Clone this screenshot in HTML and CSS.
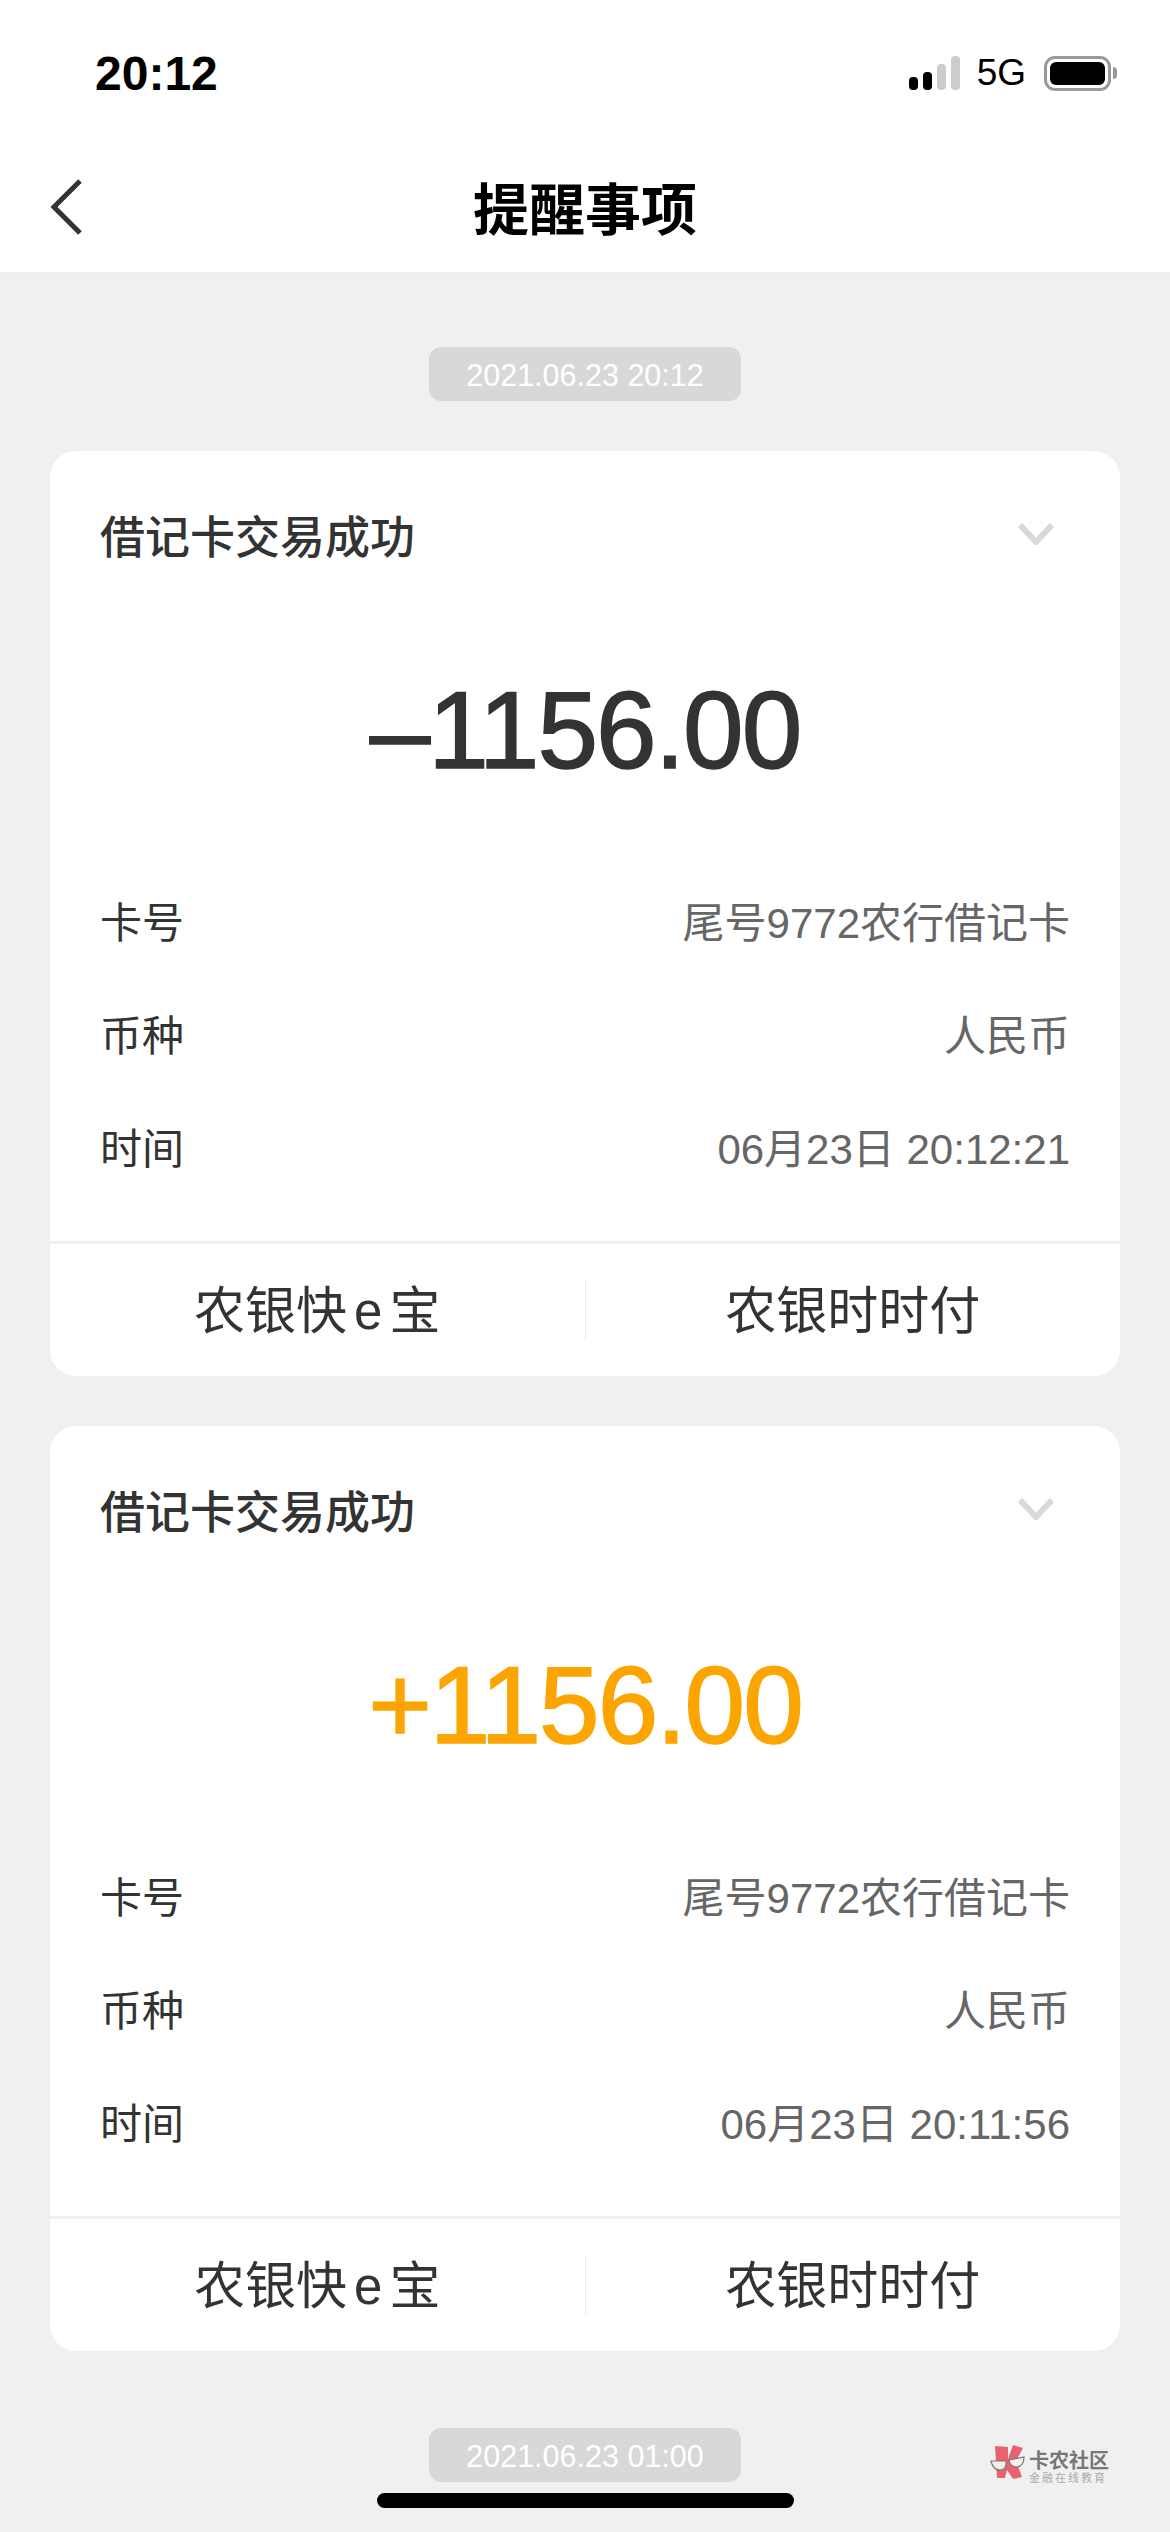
FILE: index.html
```html
<!doctype html>
<html lang="zh-CN">
  <head>
    <meta charset="utf-8">
    <title>提醒事项</title>
    <link rel="stylesheet" href="styles.css">
  </head>
  <body>
    <div class="screen">
      <header class="top">
        <div class="status">
          <span class="clock">20:12</span>
          <div class="status-right">
            <div class="signal">
              <i class="on s1"></i>
              <i class="on s2"></i>
              <i class="s3"></i>
              <i class="s4"></i>
            </div>
            <span class="net">5G</span>
            <div class="battery"><b></b></div>
            <div class="battery-cap"></div>
          </div>
        </div>
        <nav class="nav">
          <svg class="back" width="34" height="56" viewBox="0 0 34 56"><path d="M31 2 L5 28 L31 54" fill="none" stroke="#333" stroke-width="5"/></svg>
          <h1>提醒事项</h1>
        </nav>
      </header>

      <main class="list">
        <div class="stamp">2021.06.23 20:12</div>

        <section class="card">
          <div class="card-head">
            <h2>借记卡交易成功</h2>
            <svg width="36" height="22" viewBox="0 0 36 22"><path d="M2 2 L18 19 L34 2" fill="none" stroke="#d9d9d9" stroke-width="6"/></svg>
          </div>
          <div class="amount">–1156.00</div>
          <div class="rows">
            <div class="row"><span>卡号</span><em>尾号9772农行借记卡</em></div>
            <div class="row"><span>币种</span><em>人民币</em></div>
            <div class="row"><span>时间</span><em>06月23日 20:12:21</em></div>
          </div>
          <div class="actions">
            <div class="action">农银快 e 宝</div>
            <div class="action">农银时时付</div>
          </div>
        </section>

        <section class="card">
          <div class="card-head">
            <h2>借记卡交易成功</h2>
            <svg width="36" height="22" viewBox="0 0 36 22"><path d="M2 2 L18 19 L34 2" fill="none" stroke="#d9d9d9" stroke-width="6"/></svg>
          </div>
          <div class="amount income">+1156.00</div>
          <div class="rows">
            <div class="row"><span>卡号</span><em>尾号9772农行借记卡</em></div>
            <div class="row"><span>币种</span><em>人民币</em></div>
            <div class="row"><span>时间</span><em>06月23日 20:11:56</em></div>
          </div>
          <div class="actions">
            <div class="action">农银快 e 宝</div>
            <div class="action">农银时时付</div>
          </div>
        </section>

        <div class="stamp">2021.06.23 01:00</div>
      </main>

      <div class="watermark">
        <svg width="36" height="36" viewBox="0 0 36 36">
          <path d="M5 1 L18 2 V14 L23 0 L33 3 L26 16 L32 32 L23 34 L17 25 L15 33 L7 33 Z" fill="#e8636f"/>
          <path d="M1 16 L16 16 Q17 25 10 25 Q3 25 1 16 Z M19 15 L34 12 Q34 21 27 22 Q20 22 19 15 Z" fill="#f6eeee" stroke="#777" stroke-width="1.2"/>
        </svg>
        <div class="mark-text">
          <strong>卡农社区</strong>
          <small>金融在线教育</small>
        </div>
      </div>
      <div class="home-bar"></div>
    </div>
  </body>
</html>
```

FILE: styles.css
```css
html, body {
  margin: 0;
  padding: 0;
}
body {
  font-family: "Liberation Sans", "Noto Sans CJK SC", sans-serif;
  color: #333;
}
.screen {
  position: relative;
  width: 1170px;
  height: 2532px;
  overflow: hidden;
  background: #f0f0f0;
}

/* status bar + nav */
.top {
  background: #fff;
  border-bottom: 1px solid #ececec;
}
.status {
  display: flex;
  justify-content: space-between;
  align-items: center;
  height: 146px;
  padding: 0 53px 0 95px;
  box-sizing: border-box;
}
.clock {
  font-size: 48px;
  font-weight: 700;
  color: #000;
}
.status-right {
  display: flex;
  align-items: center;
}
.signal {
  display: flex;
  align-items: flex-end;
  gap: 5px;
  height: 34px;
}
.signal i {
  display: block;
  width: 9px;
  border-radius: 4px;
  background: #ccc;
}
.signal .on {
  background: #000;
}
.s1 { height: 13px; }
.s2 { height: 18px; }
.s3 { height: 26px; }
.s4 { height: 34px; }
.net {
  margin: 0 18px 0 17px;
  font-size: 37px;
  color: #000;
}
.battery {
  width: 67px;
  height: 35px;
  padding: 3px;
  border: 3px solid #999;
  border-radius: 11px;
  box-sizing: border-box;
}
.battery b {
  display: block;
  height: 100%;
  border-radius: 6px;
  background: #000;
}
.battery-cap {
  width: 4px;
  height: 12px;
  margin-left: 2px;
  border-radius: 0 6px 6px 0;
  background: #999;
}
.nav {
  position: relative;
  height: 126px;
  padding-bottom: 8px;
  box-sizing: border-box;
  display: flex;
  align-items: center;
  justify-content: center;
}
.back {
  position: absolute;
  left: 49px;
  top: 33px;
}
h1 {
  margin: 0;
  font-size: 56px;
  font-weight: 700;
  color: #000;
}

/* list */
.list {
  display: flex;
  flex-direction: column;
  align-items: center;
  padding-top: 74px;
}
.stamp {
  width: 312px;
  height: 54px;
  line-height: 56px;
  border-radius: 12px;
  background: #d8d8d8;
  color: #fff;
  font-size: 30.5px;
  text-align: center;
}
.stamp + .card {
  margin-top: 50px;
}
.card + .stamp {
  margin-top: 27px;
}
.card {
  width: 1070px;
  margin-bottom: 50px;
  border-radius: 26px;
  background: #fff;
}
.card-head {
  display: flex;
  justify-content: space-between;
  align-items: center;
  height: 50px;
  padding: 58px 66px 0 50px;
}
h2 {
  margin: 0;
  font-size: 45px;
  font-weight: 500;
  color: #333;
}
.amount {
  margin-top: 109px;
  height: 124px;
  line-height: 124px;
  font-size: 109px;
  letter-spacing: -2px;
  -webkit-text-stroke: 1.5px currentColor;
  text-align: center;
  color: #333;
}
.income {
  color: #fca500;
}
.rows {
  margin-top: 71px;
  padding: 0 50px 39px;
}
.row {
  display: flex;
  justify-content: space-between;
  align-items: center;
  height: 113px;
  font-size: 42px;
}
.row em {
  font-style: normal;
  color: #666;
}
.actions {
  display: flex;
  align-items: center;
  height: 132px;
  border-top: 3px solid #f0f0f0;
}
.action {
  flex: 1;
  height: 62px;
  line-height: 66px;
  font-size: 51px;
  word-spacing: -7px;
  text-align: center;
  color: #333;
}
.action + .action {
  border-left: 1px solid #eee;
}

/* overlays */
.watermark {
  position: absolute;
  left: 990px;
  top: 2445px;
  display: flex;
  gap: 3px;
}
.mark-text {
  display: flex;
  flex-direction: column;
  padding-top: 6px;
}
.mark-text strong {
  font-size: 20px;
  line-height: 20px;
  color: #777;
}
.mark-text small {
  margin-top: 1px;
  font-size: 11px;
  line-height: 12px;
  letter-spacing: 2px;
  color: #aaa;
}
.home-bar {
  position: absolute;
  left: 377px;
  top: 2493px;
  width: 417px;
  height: 15px;
  border-radius: 8px;
  background: #000;
}
```
